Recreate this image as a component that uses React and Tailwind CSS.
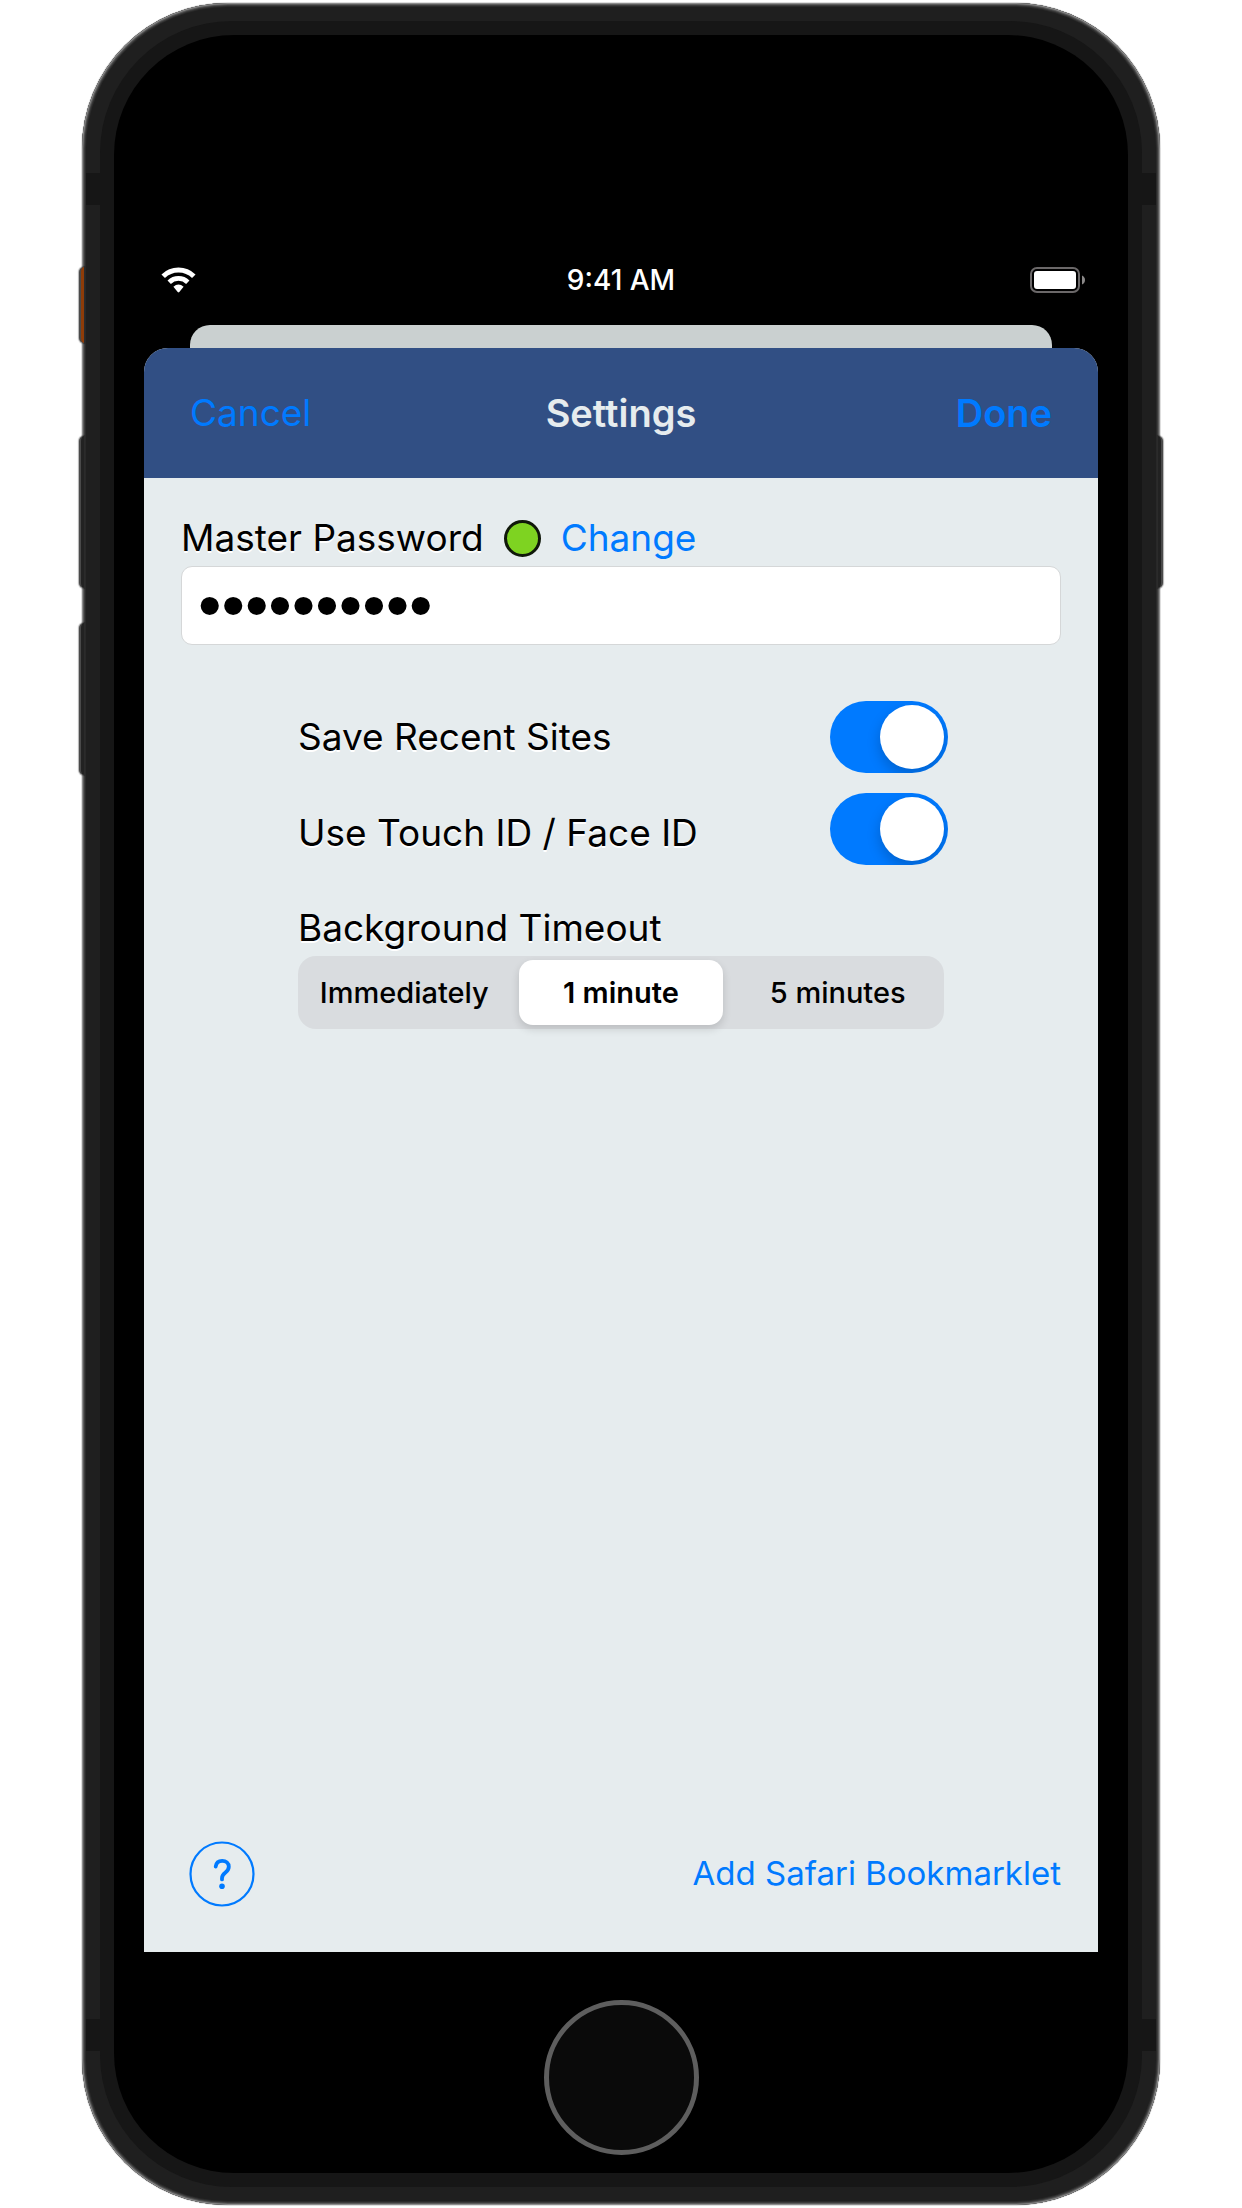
import { useState } from "react";

const TIMEOUTS = ["Immediately", "1 minute", "5 minutes"];

function WifiIcon() {
  return (
    <svg viewBox="-5 0 40 26" className="h-[26px] w-10" fill="none" role="img" aria-label="Wi-Fi">
      <path d="M2.2 9.2 A21.8 21.8 0 0 1 32.8 9.2" stroke="#fff" strokeWidth="5" />
      <path d="M8.2 15.2 A13.3 13.3 0 0 1 26.8 15.2" stroke="#fff" strokeWidth="4.8" />
      <path d="M12.4 19.8 Q17.5 15.2 22.6 19.8 L18.3 25 Q17.5 25.8 16.7 25 Z" fill="#fff" />
    </svg>
  );
}

function BatteryIcon() {
  return (
    <svg viewBox="0 0 56 26" className="h-[26px] w-[56px]" role="img" aria-label="Battery full">
      <rect x="1" y="1" width="48" height="24" rx="6" fill="none" stroke="#6b6869" strokeWidth="2" />
      <rect x="4" y="4" width="42" height="18" rx="3" fill="#fff" />
      <path d="M52 8.5 Q55 10 55 13 Q55 16 52 17.5 Z" fill="#8a8888" />
    </svg>
  );
}

function HelpIcon() {
  return (
    <svg viewBox="0 0 66 66" className="size-[66px]" fill="none" aria-hidden="true">
      <circle cx="33" cy="33" r="31.5" stroke="#007aff" strokeWidth="2.2" />
      <path
        d="M26.7 25.6 C27.2 21.8 29.8 19.9 33.2 19.9 C37 19.9 39.8 22.2 39.8 25.8 C39.8 28.6 38.4 30 36.2 31.7 C33.8 33.5 33 34.7 33 37.2 V38.4"
        stroke="#007aff"
        strokeWidth="3.8"
        strokeLinecap="round"
      />
      <circle cx="33" cy="45.2" r="2.8" fill="#007aff" />
    </svg>
  );
}

function Toggle({ id, className }) {
  return (
    <input
      id={id}
      type="checkbox"
      role="switch"
      defaultChecked
      className={
        "-mr-1 h-[72px] w-[118px] shrink-0 cursor-pointer appearance-none overflow-hidden rounded-full bg-[#d1d1d6] p-1 before:block before:size-16 before:rounded-full before:bg-white before:shadow-[0_6px_14px_rgba(0,0,0,0.2)] checked:bg-[#007aff] checked:before:translate-x-[46px] " +
        className
      }
    />
  );
}

function SideButton({ className }) {
  return (
    <span
      className={
        "absolute w-[5px] border-[#4a4a4a] shadow-[0_0_1px_1px_rgba(0,0,0,0.3)] " + className
      }
    />
  );
}

function AntennaBands({ className }) {
  return (
    <div className={"absolute inset-x-1 flex h-8 justify-between " + className}>
      <span className="w-[14px] bg-[#161616]" />
      <span className="w-[14px] bg-[#161616]" />
    </div>
  );
}

export default function App() {
  const [timeout, setTimeoutChoice] = useState("1 minute");

  return (
    <div className="flex min-h-screen justify-center bg-white px-2 py-[3px] font-['Inter','Liberation_Sans',sans-serif] text-black">
      <div className="relative flex w-full max-w-[1078px] flex-col">
        <div className="relative flex grow flex-col rounded-[146px] bg-[#1f1f1f] p-[18px] shadow-[0_0_0_1px_#dedede,inset_0_0_0_1px_#8c8c8c,inset_0_0_0_2px_#5c5c5c,inset_0_0_0_3px_#3c3c3c,inset_0_0_0_4px_#2a2a2a]">
          <AntennaBands className="top-[170px]" />
          <AntennaBands className="bottom-[154px]" />

          <div className="flex grow flex-col rounded-[132px] bg-[#161616] p-[14px]">
            <div className="flex grow flex-col rounded-[120px] bg-black px-[30px]">
              <div className="mt-[199px] grid h-[91px] grid-cols-3 items-center px-3 text-[28px] font-medium text-white">
                <WifiIcon />
                <span className="text-center">9:41 AM</span>
                <span className="justify-self-end">
                  <BatteryIcon />
                </span>
              </div>

              <div className="mx-[46px] h-[23px] rounded-t-[20px] bg-[#cad0d0]" />

              <main className="flex grow flex-col overflow-hidden rounded-t-[24px] bg-[#e6ecee]">
                <header className="grid h-[130px] grid-cols-3 items-center bg-[#314f84] px-[46px] text-[37px] text-[#007aff]">
                  <button type="button" className="cursor-pointer justify-self-start">
                    Cancel
                  </button>
                  <h1 className="text-center text-[38px] font-semibold text-[#e6ecee]">Settings</h1>
                  <button type="button" className="cursor-pointer justify-self-end text-[38px] font-semibold">
                    Done
                  </button>
                </header>

                <section className="px-[37px] pt-8">
                  <div className="flex h-14 items-center text-[37px]">
                    <label htmlFor="master" className="[text-shadow:0_2px_0_white]">
                      Master Password
                    </label>
                    <span className="mx-5 size-[37px] rounded-full border-[3px] border-[#10180a] bg-[#7ed321]" />
                    <button type="button" className="cursor-pointer text-[#007aff]">
                      Change
                    </button>
                  </div>
                  <input
                    id="master"
                    type="password"
                    defaultValue="abcdefghij"
                    className="block h-[79px] w-full rounded-[11px] border border-[#d5d7d8] bg-white px-4 font-['Liberation_Sans',sans-serif] text-[67px] outline-none"
                  />
                </section>

                <section className="mx-auto mt-11 w-full max-w-[646px] text-[37px]">
                  <div className="flex h-24 items-center justify-between">
                    <label htmlFor="recent" className="[text-shadow:0_2px_0_white]">
                      Save Recent Sites
                    </label>
                    <Toggle id="recent" className="" />
                  </div>
                  <div className="flex h-24 items-center justify-between">
                    <label htmlFor="biometric" className="[text-shadow:0_2px_0_white]">
                      Use Touch ID / Face ID
                    </label>
                    <Toggle id="biometric" className="mb-2" />
                  </div>
                  <fieldset className="mt-[19px]">
                    <legend className="h-14 leading-[56px] [text-shadow:0_2px_0_white]">
                      Background Timeout
                    </legend>
                    <div className="grid h-[73px] grid-cols-3 gap-3 rounded-[18px] bg-[#d9dcdf] p-1 text-[29px]">
                      {TIMEOUTS.map((name) => (
                        <label
                          key={name}
                          className="flex cursor-pointer items-center justify-center rounded-[14px] font-medium has-checked:bg-white has-checked:font-semibold has-checked:shadow-[0_4px_8px_rgba(0,0,0,0.14)]"
                        >
                          <input
                            type="radio"
                            name="timeout"
                            className="sr-only"
                            checked={timeout === name}
                            onChange={() => setTimeoutChoice(name)}
                          />
                          {name}
                        </label>
                      ))}
                    </div>
                  </fieldset>
                </section>

                <footer className="mt-auto flex items-center justify-between pr-[37px] pb-[45px] pl-[45px]">
                  <button type="button" aria-label="Help" className="cursor-pointer">
                    <HelpIcon />
                  </button>
                  <a href="#bookmarklet" className="text-[33px] text-[#007aff]">
                    Add Safari Bookmarklet
                  </a>
                </footer>
              </main>

              <div className="flex h-[221px] justify-center pt-12">
                <button
                  type="button"
                  aria-label="Home"
                  className="size-[155px] cursor-pointer rounded-full border-[5px] border-[#5e5e5e] bg-[#0a0a0a]"
                />
              </div>
            </div>
          </div>
        </div>

        <SideButton className="top-[264px] -left-[3px] h-[76px] rounded-l-[5px] border-l-2 bg-[#8f3c08]" />
        <SideButton className="top-[433px] -left-[3px] h-[152px] rounded-l-[5px] border-l-2 bg-[#222222]" />
        <SideButton className="top-[620px] -left-[3px] h-[152px] rounded-l-[5px] border-l-2 bg-[#222222]" />
        <SideButton className="top-[433px] -right-[3px] h-[152px] rounded-r-[5px] border-r-2 bg-[#222222]" />
      </div>
    </div>
  );
}
